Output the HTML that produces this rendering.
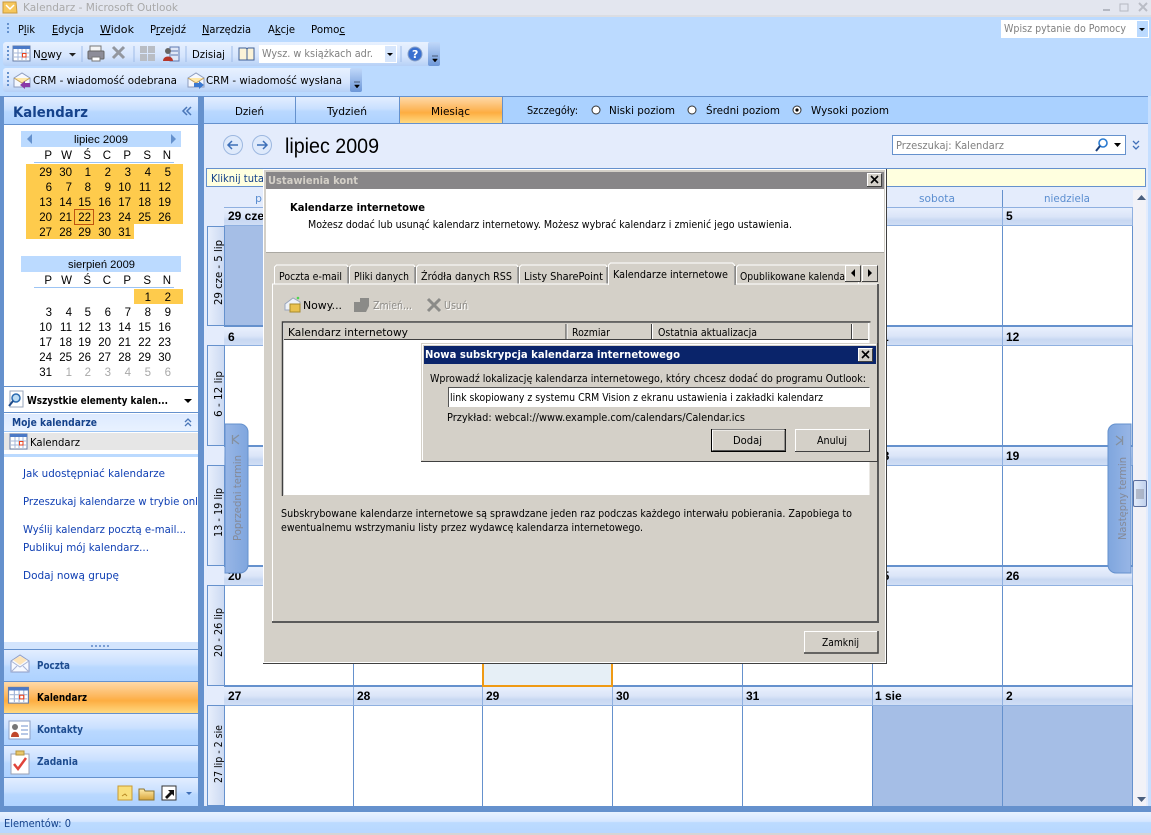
<!DOCTYPE html>
<html lang="pl">
<head>
<meta charset="utf-8">
<title>Kalendarz - Microsoft Outlook</title>
<style>
html,body{margin:0;padding:0;width:1151px;height:835px;overflow:hidden;background:#bbdaff}
svg{display:block}
text{font-family:"DejaVu Sans","Liberation Sans",sans-serif;font-size:11px;fill:#000;white-space:pre}
.b{font-weight:bold}
.n{font-family:"Liberation Sans",sans-serif;font-size:11.5px;text-anchor:end}
.g{fill:#a9a9a9}
.h{font-family:"Liberation Sans",sans-serif;font-weight:bold;font-size:12px}
.l{fill:#0f3fb3}
.d{fill:#15428b}
.m{fill:#808080}
</style>
</head>
<body>
<svg xmlns="http://www.w3.org/2000/svg" width="1151" height="835" viewBox="0 0 1151 835">
<defs>
<linearGradient id="tab" x1="0" y1="0" x2="0" y2="1"><stop offset="0" stop-color="#e3eeff"/><stop offset=".45" stop-color="#c9e0ff"/><stop offset=".55" stop-color="#b9d8ff"/><stop offset="1" stop-color="#aed2ff"/></linearGradient>
<linearGradient id="org" x1="0" y1="0" x2="0" y2="1"><stop offset="0" stop-color="#fed9a8"/><stop offset=".45" stop-color="#fdb85f"/><stop offset=".6" stop-color="#fdad41"/><stop offset="1" stop-color="#ffd981"/></linearGradient>
<linearGradient id="hdr" x1="0" y1="0" x2="0" y2="1"><stop offset="0" stop-color="#e9f0fd"/><stop offset=".5" stop-color="#dbe5f8"/><stop offset=".7" stop-color="#c8d8f2"/><stop offset="1" stop-color="#d0def5"/></linearGradient>
<linearGradient id="tb" x1="0" y1="0" x2="0" y2="1"><stop offset="0" stop-color="#e8f1ff"/><stop offset=".6" stop-color="#d5e5fd"/><stop offset="1" stop-color="#b6d0f6"/></linearGradient>
<linearGradient id="chev" x1="0" y1="0" x2="0" y2="1"><stop offset="0" stop-color="#c0d8fa"/><stop offset="1" stop-color="#6d97d8"/></linearGradient>
<linearGradient id="st" x1="0" y1="0" x2="0" y2="1"><stop offset="0" stop-color="#e8f2ff"/><stop offset=".45" stop-color="#d5e6ff"/><stop offset=".5" stop-color="#bcdbff"/><stop offset="1" stop-color="#b7d7ff"/></linearGradient>
<linearGradient id="wk" x1="0" y1="0" x2="1" y2="0"><stop offset="0" stop-color="#e8effc"/><stop offset="1" stop-color="#cbd9f2"/></linearGradient>
<linearGradient id="side" x1="0" y1="0" x2="1" y2="0"><stop offset="0" stop-color="#98b6e6"/><stop offset="1" stop-color="#7fa6de"/></linearGradient>
<linearGradient id="side2" x1="1" y1="0" x2="0" y2="0"><stop offset="0" stop-color="#98b6e6"/><stop offset="1" stop-color="#7fa6de"/></linearGradient>
<linearGradient id="moj" x1="0" y1="0" x2="0" y2="1"><stop offset="0" stop-color="#ddeaff"/><stop offset="1" stop-color="#e9f2ff"/></linearGradient>
<linearGradient id="thumb" x1="0" y1="0" x2="1" y2="0"><stop offset="0" stop-color="#e4ecfa"/><stop offset="1" stop-color="#bfd0ec"/></linearGradient>
<linearGradient id="fold" x1="0" y1="0" x2="0" y2="1"><stop offset="0" stop-color="#ffedae"/><stop offset="1" stop-color="#d9a53a"/></linearGradient>
<g id="cal">
<rect x="0" y="1" width="17" height="15" fill="#fff" stroke="#6a7fa6"/>
<rect x="0" y="1" width="17" height="3" fill="#4b79c6"/>
<path d="M1 8h15M1 12h15M5 4v11M9 4v11M13 4v11" stroke="#a5b7d8" fill="none"/>
<rect x="9.5" y="8.5" width="3.5" height="3.5" fill="#fff" stroke="#e8401c"/>
</g>
<g id="chv"><path d="M2 9h6M2.5 12h5l-2.5 3z" fill="#000" stroke="#000" stroke-width=".5"/></g>
<g id="env">
<path d="M1 6l8-5 8 5v9H1z" fill="#f5f8ff" stroke="#8d9cbd"/>
<path d="M1 6l8 5 8-5" fill="#ffe8a8" stroke="#c0a060"/>
</g>
</defs>

<!-- window chrome -->
<rect width="1151" height="835" fill="#bbdaff"/>
<rect width="1151" height="15" fill="#e3e6ef"/>
<rect y="15" width="1151" height="2" fill="#dbdde2"/>
<path d="M3 2h13l1 11H3z" fill="#f6c75c" stroke="#c99a3d"/>
<path d="M6 5l4 4 4-4" fill="none" stroke="#fff" stroke-width="1.5"/>
<text x="23" y="11" textLength="155" lengthAdjust="spacingAndGlyphs" style="fill:#a9a9a9">Kalendarz - Microsoft Outlook</text>
<rect x="1103" y="9" width="7" height="2" fill="#b4b8c2"/>
<rect x="1120" y="4" width="8" height="7" fill="none" stroke="#b4b8c2"/>
<path d="M1139 3l8 8M1147 3l-8 8" stroke="#b9bcc5" stroke-width="2"/>

<!-- menu -->
<path d="M7 23h2v2H7zM7 27h2v2H7zM7 31h2v2H7z" fill="#6591cd"/>
<text x="18" y="33" textLength="17" lengthAdjust="spacingAndGlyphs">P<tspan text-decoration="underline">l</tspan>ik</text>
<text x="52" y="33" textLength="32" lengthAdjust="spacingAndGlyphs"><tspan text-decoration="underline">E</tspan>dycja</text>
<text x="100" y="33" textLength="34" lengthAdjust="spacingAndGlyphs"><tspan text-decoration="underline">W</tspan>idok</text>
<text x="150" y="33" textLength="36" lengthAdjust="spacingAndGlyphs">P<tspan text-decoration="underline">r</tspan>zejdź</text>
<text x="202" y="33" textLength="49" lengthAdjust="spacingAndGlyphs"><tspan text-decoration="underline">N</tspan>arzędzia</text>
<text x="268" y="33" textLength="27" lengthAdjust="spacingAndGlyphs">A<tspan text-decoration="underline">k</tspan>cje</text>
<text x="311" y="33" textLength="34" lengthAdjust="spacingAndGlyphs">Pomo<tspan text-decoration="underline">c</tspan></text>
<rect x="1001" y="20" width="148" height="18" fill="#fff"/>
<text x="1004" y="32" textLength="122" lengthAdjust="spacingAndGlyphs" class="m">Wpisz pytanie do Pomocy</text>
<rect x="1137" y="21" width="11" height="16" fill="#bbdaff"/>
<path d="M1139 28h6l-3 3z" fill="#000"/>

<!-- toolbar 1 -->
<rect x="3" y="42" width="437" height="24" rx="3" fill="url(#tb)"/>
<rect x="428" y="42" width="12" height="24" rx="2" fill="url(#chev)"/>
<use href="#chv" x="430" y="47"/>
<path d="M7 46h2v2H7zM7 50h2v2H7zM7 54h2v2H7zM7 58h2v2H7z" fill="#6591cd"/>
<use href="#cal" x="13" y="45"/>
<text x="33" y="58" textLength="29" lengthAdjust="spacingAndGlyphs">N<tspan text-decoration="underline">o</tspan>wy</text>
<path d="M69 53h7l-3.500 3.500z" fill="#222"/>
<path d="M82 46v16M134 46v16M186 46v16M232 46v16M401 46v16" stroke="#9fbce8"/>
<rect x="90" y="46" width="11" height="5" fill="#f4f4f4" stroke="#777"/>
<rect x="88" y="51" width="16" height="8" rx="1" fill="#8d8d98" stroke="#666"/>
<rect x="92" y="57" width="8" height="4" fill="#fff" stroke="#777"/>
<path d="M113 47l11 11M124 47l-11 11" stroke="#93979f" stroke-width="3"/>
<path d="M140 46h7v7h-7zM148 46h7v7h-7zM140 54h7v7h-7zM148 54h7v7h-7z" fill="#b9bdc4"/>
<rect x="170" y="47" width="9" height="14" fill="#dfe7f7" stroke="#5f7ab0"/>
<path d="M171 51h7M171 55h7" stroke="#5f7ab0"/>
<circle cx="168" cy="51" r="3" fill="#666"/><path d="M163 61c0-6 10-6 10 0z" fill="#b5352a"/>
<text x="192" y="58" textLength="33" lengthAdjust="spacingAndGlyphs">Dzisia<tspan text-decoration="underline">j</tspan></text>
<path d="M239 48h7l1 1 1-1h6v12h-15z" fill="#fbf3d8" stroke="#3f5f96"/><path d="M247 49v11" stroke="#3f5f96"/>
<rect x="259" y="45" width="138" height="18" fill="#fff"/>
<text x="262" y="57" textLength="111" lengthAdjust="spacingAndGlyphs" class="m">Wysz. w książkach adr.</text>
<rect x="385" y="46" width="11" height="16" fill="#d7e6fc"/>
<path d="M387 53h6l-3 3z" fill="#000"/>
<circle cx="415" cy="54" r="7" fill="#3a70d0" stroke="#8aa2c8"/>
<text x="412" y="58" class="b" style="fill:#fff">?</text>

<!-- toolbar 2 -->
<rect x="3" y="68" width="359" height="24" rx="3" fill="url(#tb)"/>
<rect x="350" y="68" width="12" height="24" rx="2" fill="url(#chev)"/>
<use href="#chv" x="352" y="73"/>
<path d="M7 72h2v2H7zM7 76h2v2H7zM7 80h2v2H7zM7 84h2v2H7z" fill="#6591cd"/>
<use href="#env" x="13" y="72"/>
<path d="M20 85l5-4v2h5v4h-5v2z" fill="#8a3aa8"/>
<text x="33" y="84" textLength="144" lengthAdjust="spacingAndGlyphs">CRM - wiadomość odebrana</text>
<use href="#env" x="187" y="72"/>
<path d="M204 85l-5-4v2h-5v4h5v2z" fill="#3a78d0"/>
<text x="206" y="84" textLength="136" lengthAdjust="spacingAndGlyphs">CRM - wiadomość wysłana</text>

<!-- frame -->
<rect x="0" y="96" width="1148" height="716" fill="#6591cd"/>
<rect x="1148" y="96" width="3" height="716" fill="#c6dfff"/>

<!-- left pane -->
<rect x="4" y="97" width="194" height="27" fill="url(#tab)"/>
<text x="13" y="117" class="b d" style="font-size:14px" textLength="75" lengthAdjust="spacingAndGlyphs">Kalendarz</text>
<path d="M187 107l-4 4 4 4M191 107l-4 4 4 4" fill="none" stroke="#4a76b8" stroke-width="1.500"/>
<rect x="4" y="125" width="194" height="517" fill="#fff"/>

<rect x="21" y="131" width="160" height="16" fill="#bbdaff"/>
<path d="M32 134v10l-5-5z" fill="#6591cd"/><path d="M171 134v10l5-5z" fill="#6591cd"/>
<text x="74" y="143" textLength="54" lengthAdjust="spacingAndGlyphs" style="font-family:'Liberation Sans',sans-serif">lipiec 2009</text>
<g>
<text class="n" x="52" y="159">P</text><text class="n" x="72" y="159">W</text><text class="n" x="91" y="159">Ś</text><text class="n" x="111" y="159">C</text><text class="n" x="131" y="159">P</text><text class="n" x="151" y="159">S</text><text class="n" x="171" y="159">N</text>
</g>
<rect x="34" y="162" width="140" height="1" fill="#9cc4f4"/>
<path d="M26 164h157v60h-49v15H26z" fill="#fecb4c"/>
<rect x="74.500" y="209.500" width="19" height="15" fill="none" stroke="#c0540f"/>
<g>
<text class="n" x="52" y="176">29</text><text class="n" x="72" y="176">30</text><text class="n" x="91" y="176">1</text><text class="n" x="111" y="176">2</text><text class="n" x="131" y="176">3</text><text class="n" x="151" y="176">4</text><text class="n" x="171" y="176">5</text>
<text class="n" x="52" y="191">6</text><text class="n" x="72" y="191">7</text><text class="n" x="91" y="191">8</text><text class="n" x="111" y="191">9</text><text class="n" x="131" y="191">10</text><text class="n" x="151" y="191">11</text><text class="n" x="171" y="191">12</text>
<text class="n" x="52" y="206">13</text><text class="n" x="72" y="206">14</text><text class="n" x="91" y="206">15</text><text class="n" x="111" y="206">16</text><text class="n" x="131" y="206">17</text><text class="n" x="151" y="206">18</text><text class="n" x="171" y="206">19</text>
<text class="n" x="52" y="221">20</text><text class="n" x="72" y="221">21</text><text class="n" x="91" y="221">22</text><text class="n" x="111" y="221">23</text><text class="n" x="131" y="221">24</text><text class="n" x="151" y="221">25</text><text class="n" x="171" y="221">26</text>
<text class="n" x="52" y="236">27</text><text class="n" x="72" y="236">28</text><text class="n" x="91" y="236">29</text><text class="n" x="111" y="236">30</text><text class="n" x="131" y="236">31</text>
</g>

<rect x="21" y="256" width="160" height="16" fill="#bbdaff"/>
<text x="68" y="268" textLength="67" lengthAdjust="spacingAndGlyphs" style="font-family:'Liberation Sans',sans-serif">sierpień 2009</text>
<g>
<text class="n" x="52" y="284">P</text><text class="n" x="72" y="284">W</text><text class="n" x="91" y="284">Ś</text><text class="n" x="111" y="284">C</text><text class="n" x="131" y="284">P</text><text class="n" x="151" y="284">S</text><text class="n" x="171" y="284">N</text>
</g>
<rect x="34" y="287" width="140" height="1" fill="#9cc4f4"/>
<rect x="134" y="289" width="49" height="15" fill="#fecb4c"/>
<g>
<text class="n" x="151" y="301">1</text><text class="n" x="171" y="301">2</text>
<text class="n" x="52" y="316">3</text><text class="n" x="72" y="316">4</text><text class="n" x="91" y="316">5</text><text class="n" x="111" y="316">6</text><text class="n" x="131" y="316">7</text><text class="n" x="151" y="316">8</text><text class="n" x="171" y="316">9</text>
<text class="n" x="52" y="331">10</text><text class="n" x="72" y="331">11</text><text class="n" x="91" y="331">12</text><text class="n" x="111" y="331">13</text><text class="n" x="131" y="331">14</text><text class="n" x="151" y="331">15</text><text class="n" x="171" y="331">16</text>
<text class="n" x="52" y="346">17</text><text class="n" x="72" y="346">18</text><text class="n" x="91" y="346">19</text><text class="n" x="111" y="346">20</text><text class="n" x="131" y="346">21</text><text class="n" x="151" y="346">22</text><text class="n" x="171" y="346">23</text>
<text class="n" x="52" y="361">24</text><text class="n" x="72" y="361">25</text><text class="n" x="91" y="361">26</text><text class="n" x="111" y="361">27</text><text class="n" x="131" y="361">28</text><text class="n" x="151" y="361">29</text><text class="n" x="171" y="361">30</text>
<text class="n" x="52" y="376">31</text><text class="n g" x="72" y="376">1</text><text class="n g" x="91" y="376">2</text><text class="n g" x="111" y="376">3</text><text class="n g" x="131" y="376">4</text><text class="n g" x="151" y="376">5</text><text class="n g" x="171" y="376">6</text>
</g>

<rect x="4" y="386" width="194" height="1" fill="#6591cd"/>
<rect x="10" y="391" width="13" height="16" fill="#fff" stroke="#9aa7bd"/>
<circle cx="16" cy="398" r="4" fill="#bcdcf4" stroke="#2a6ab0" stroke-width="1.500"/><path d="M13 401l-4 5" stroke="#1f4a88" stroke-width="2"/>
<text x="27" y="404" class="b" textLength="141" lengthAdjust="spacingAndGlyphs">Wszystkie elementy kalen...</text>
<path d="M184 399h8l-4 4z" fill="#000"/>
<rect x="4" y="412" width="194" height="1" fill="#6591cd"/>
<rect x="4" y="414" width="194" height="18" fill="url(#moj)"/>
<rect x="4" y="431" width="194" height="1" fill="#9cc4f4"/>
<text x="12" y="426" class="b d" textLength="85" lengthAdjust="spacingAndGlyphs">Moje kalendarze</text>
<path d="M185 422l3-3 3 3M185 426l3-3 3 3" fill="none" stroke="#4a76b8" stroke-width="1.300"/>
<rect x="4" y="433" width="194" height="17" fill="#e6e6e6"/>
<use href="#cal" x="10" y="433"/>
<text x="30" y="446" textLength="50" lengthAdjust="spacingAndGlyphs">Kalendarz</text>
<rect x="4" y="454" width="194" height="3" fill="#bbdaff"/>
<text x="23" y="477" class="l" textLength="142" lengthAdjust="spacingAndGlyphs">Jak udostępniać kalendarze</text>
<text x="23" y="505" class="l" textLength="175" lengthAdjust="spacingAndGlyphs">Przeszukaj kalendarze w trybie onl</text>
<text x="23" y="533" class="l" textLength="163" lengthAdjust="spacingAndGlyphs">Wyślij kalendarz pocztą e-mail...</text>
<text x="23" y="551" class="l" textLength="126" lengthAdjust="spacingAndGlyphs">Publikuj mój kalendarz...</text>
<text x="23" y="579" class="l" textLength="96" lengthAdjust="spacingAndGlyphs">Dodaj nową grupę</text>

<!-- nav buttons -->
<rect x="4" y="642" width="194" height="7" fill="#d4e5fd"/>
<path d="M91 645h2v2h-2zM95 645h2v2h-2zM99 645h2v2h-2zM103 645h2v2h-2zM107 645h2v2h-2z" fill="#7a9ed4"/>
<rect x="4" y="649" width="194" height="1" fill="#6591cd"/>
<rect x="4" y="650" width="194" height="31" fill="url(#tab)"/>
<rect x="4" y="681" width="194" height="1" fill="#6591cd"/>
<rect x="4" y="682" width="194" height="31" fill="url(#org)"/>
<rect x="4" y="713" width="194" height="1" fill="#6591cd"/>
<rect x="4" y="714" width="194" height="31" fill="url(#tab)"/>
<rect x="4" y="745" width="194" height="1" fill="#6591cd"/>
<rect x="4" y="746" width="194" height="31" fill="url(#tab)"/>
<rect x="4" y="777" width="194" height="1" fill="#6591cd"/>
<rect x="4" y="778" width="194" height="30" fill="url(#tab)"/>
<path d="M11 661l9-6 9 6v11H11z" fill="#f6f9ff" stroke="#8e9cc6"/>
<path d="M11 661l9 6 9-6M11 672l6-6M29 672l-6-6" fill="none" stroke="#a8b4d4"/>
<path d="M13 660l7-4 7 4-7 5z" fill="#fde4b8"/>
<use href="#cal" x="9" y="686" transform="translate(-2 -34) scale(1.170 1.050)"/>
<rect x="9" y="721" width="21" height="18" fill="#fff" stroke="#8ea0c6"/>
<circle cx="15" cy="727" r="3" fill="#777"/><path d="M11 737c0-7 8-7 8 0z" fill="#c0472b"/>
<path d="M21 726h7M21 730h7M21 734h7" stroke="#6f92cc"/>
<rect x="11" y="754" width="18" height="20" fill="#fff" stroke="#9aa2b4"/>
<rect x="16" y="751" width="8" height="4" fill="#e9c76a" stroke="#b59540"/>
<path d="M14 764l4 5 8-11" fill="none" stroke="#e0443a" stroke-width="2.500"/>
<text x="37" y="669" class="b" style="fill:#1e4c8f" textLength="33" lengthAdjust="spacingAndGlyphs">Poczta</text>
<text x="37" y="701" class="b" textLength="50" lengthAdjust="spacingAndGlyphs">Kalendarz</text>
<text x="37" y="733" class="b" style="fill:#1e4c8f" textLength="46" lengthAdjust="spacingAndGlyphs">Kontakty</text>
<text x="37" y="765" class="b" style="fill:#1e4c8f" textLength="41" lengthAdjust="spacingAndGlyphs">Zadania</text>
<rect x="118" y="786" width="14" height="14" fill="#f9df7b" stroke="#c79a33"/>
<path d="M122 796l3-2 2 2" stroke="#b98a25" fill="none"/>
<path d="M139 789h5l1 2h9v9h-15z" fill="url(#fold)" stroke="#8d7430"/>
<rect x="162" y="786" width="14" height="14" fill="#fff" stroke="#333"/>
<path d="M165 797l5-5-2-2h6v6l-2-2-5 5z" fill="#111"/>
<path d="M186 792h6l-3 3z" fill="#3f6fb8"/>

<!-- right pane -->
<rect x="204" y="97" width="944" height="27" fill="#aad1ff"/>
<rect x="204" y="97" width="91" height="26" fill="url(#tab)"/>
<rect x="296" y="97" width="103" height="26" fill="url(#tab)"/>
<rect x="400" y="97" width="102" height="26" fill="url(#org)"/>
<path d="M295.500 97v26M399.500 97v26M502.500 97v26" stroke="#6591cd"/>
<rect x="204" y="123" width="944" height="1" fill="#6591cd"/>
<rect x="204" y="124" width="944" height="682" fill="#e4ecfc"/>
<text x="235" y="115" textLength="29" lengthAdjust="spacingAndGlyphs">Dzień</text>
<text x="327" y="115" textLength="40" lengthAdjust="spacingAndGlyphs">Tydzień</text>
<text x="431" y="115" textLength="39" lengthAdjust="spacingAndGlyphs">Miesiąc</text>
<text x="527" y="114" textLength="51" lengthAdjust="spacingAndGlyphs">Szczegóły:</text>
<circle cx="596" cy="110" r="4" fill="#fff" stroke="#333"/>
<text x="609" y="114" textLength="66" lengthAdjust="spacingAndGlyphs">Niski poziom</text>
<circle cx="692" cy="110" r="4" fill="#fff" stroke="#333"/>
<text x="706" y="114" textLength="74" lengthAdjust="spacingAndGlyphs">Średni poziom</text>
<circle cx="797" cy="110" r="4" fill="#fff" stroke="#333"/><circle cx="797" cy="110" r="1.600" fill="#000"/>
<text x="811" y="114" textLength="78" lengthAdjust="spacingAndGlyphs">Wysoki poziom</text>

<circle cx="233" cy="145" r="9.500" fill="#dfeafb" stroke="#9db8e0"/>
<path d="M238 145h-9M232 141l-4 4 4 4" fill="none" stroke="#3d6fb8" stroke-width="1.500"/>
<circle cx="262" cy="145" r="9.500" fill="#dfeafb" stroke="#9db8e0"/>
<path d="M257 145h9M263 141l4 4-4 4" fill="none" stroke="#3d6fb8" stroke-width="1.500"/>
<text x="285" y="153" style="font-family:'Liberation Sans',sans-serif;font-size:21px" textLength="94" lengthAdjust="spacingAndGlyphs">lipiec 2009</text>
<rect x="892.500" y="135.500" width="233" height="19" fill="#fff" stroke="#6591cd"/>
<text x="896" y="149" textLength="108" lengthAdjust="spacingAndGlyphs" class="m">Przeszukaj: Kalendarz</text>
<circle cx="1103" cy="143" r="4" fill="#fff" stroke="#2a7ad0" stroke-width="1.600"/>
<path d="M1100 146l-4 5" stroke="#1b3f7a" stroke-width="2"/>
<path d="M1114 143h7l-3.500 4z" fill="#000"/>
<path d="M1133 141l3 3 3-3M1133 146l3 3 3-3" fill="none" stroke="#3f6fb8" stroke-width="1.300"/>
<rect x="206.500" y="168.500" width="939" height="18" fill="#ffffdf" stroke="#6591cd"/>
<text x="211" y="182" class="d" textLength="53" lengthAdjust="spacingAndGlyphs">Kliknij tuta</text>

<text x="255" y="202" style="fill:#5b8ed0">p</text>
<text x="919" y="202" style="fill:#5b8ed0" textLength="36" lengthAdjust="spacingAndGlyphs">sobota</text>
<text x="1044" y="202" style="fill:#5b8ed0" textLength="46" lengthAdjust="spacingAndGlyphs">niedziela</text>
<path d="M1002.500 190v17" stroke="#6591cd"/>

<!-- grid -->
<rect x="224" y="207" width="909" height="599" fill="#fff"/>
<rect x="225" y="226" width="128" height="99" fill="#a5bee6"/>
<rect x="873" y="706" width="259" height="100" fill="#a5bee6"/>
<rect x="483" y="660" width="129" height="26" fill="#e6eff6"/>
<path d="M224.500 207v599M353.500 207v599M482.500 207v599M612.500 207v599M742.500 207v599M872.500 207v599M1002.500 207v599M1132.500 207v599" stroke="#6591cd"/>
<rect x="224" y="207" width="908" height="19" fill="url(#hdr)"/>
<rect x="224" y="327" width="908" height="18" fill="url(#hdr)"/>
<rect x="224" y="447" width="908" height="18" fill="url(#hdr)"/>
<rect x="224" y="567" width="908" height="18" fill="url(#hdr)"/>
<rect x="224" y="687" width="908" height="18" fill="url(#hdr)"/>
<path d="M224 207.500h908M224 225.500h908M224 345.500h908M224 465.500h908M224 585.500h908M224 705.500h908" stroke="#8fb0e0"/>
<path d="M353.500 207v19M482.500 207v19M612.500 207v19M742.500 207v19M872.500 207v19M1002.500 207v19M1132.500 207v19M353.500 327v18M482.500 327v18M612.500 327v18M742.500 327v18M872.500 327v18M1002.500 327v18M1132.500 327v18M353.500 447v18M482.500 447v18M612.500 447v18M742.500 447v18M872.500 447v18M1002.500 447v18M1132.500 447v18M353.500 567v18M482.500 567v18M612.500 567v18M742.500 567v18M872.500 567v18M1002.500 567v18M1132.500 567v18M353.500 687v18M482.500 687v18M612.500 687v18M742.500 687v18M872.500 687v18M1002.500 687v18M1132.500 687v18" stroke="#8fb0e0"/>
<path d="M224 326h908M224 446h908M224 566h908M224 686h908" stroke="#6591cd" stroke-width="2"/>
<path d="M483 660v26h129v-26" fill="none" stroke="#ef9a14" stroke-width="2"/>
<g>
<text class="h" x="228" y="220">29 cze</text>
<text class="h" x="1006" y="220">5</text>
<text class="h" x="228" y="341">6</text>
<text class="h" x="876" y="341">11</text>
<text class="h" x="1006" y="341">12</text>
<text class="h" x="876" y="460">18</text>
<text class="h" x="1006" y="460">19</text>
<text class="h" x="228" y="580">20</text>
<text class="h" x="876" y="580">25</text>
<text class="h" x="1006" y="580">26</text>
<text class="h" x="228" y="700">27</text>
<text class="h" x="357" y="700">28</text>
<text class="h" x="486" y="700">29</text>
<text class="h" x="616" y="700">30</text>
<text class="h" x="746" y="700">31</text>
<text class="h" x="875" y="700">1 sie</text>
<text class="h" x="1006" y="700">2</text>
</g>
<!-- week labels -->
<rect x="207.500" y="226.500" width="17" height="99" fill="url(#wk)" stroke="#6591cd"/>
<rect x="207.500" y="345.500" width="17" height="100" fill="url(#wk)" stroke="#6591cd"/>
<rect x="207.500" y="465.500" width="17" height="100" fill="url(#wk)" stroke="#6591cd"/>
<rect x="207.500" y="585.500" width="17" height="100" fill="url(#wk)" stroke="#6591cd"/>
<rect x="207.500" y="705.500" width="17" height="100" fill="url(#wk)" stroke="#6591cd"/>
<text transform="translate(222 305) rotate(-90)" textLength="65" lengthAdjust="spacingAndGlyphs">29 cze - 5 lip</text>
<text transform="translate(222 417) rotate(-90)" textLength="46" lengthAdjust="spacingAndGlyphs">6 - 12 lip</text>
<text transform="translate(222 537) rotate(-90)" textLength="49" lengthAdjust="spacingAndGlyphs">13 - 19 lip</text>
<text transform="translate(222 657) rotate(-90)" textLength="49" lengthAdjust="spacingAndGlyphs">20 - 26 lip</text>
<text transform="translate(222 783) rotate(-90)" textLength="58" lengthAdjust="spacingAndGlyphs">27 lip - 2 sie</text>

<!-- side tabs -->
<path d="M225 424h15a8 8 0 0 1 8 8v133a8 8 0 0 1-8 8h-15z" fill="url(#side)" stroke="#6591cd"/>
<path d="M232.500 435v9M239 435l-6 4.500 6 4.500" fill="none" stroke="#85909f" stroke-width="1.300"/>
<text transform="translate(241 541) rotate(-90)" style="fill:#858a98" textLength="86" lengthAdjust="spacingAndGlyphs">Poprzedni termin</text>
<path d="M1131 424h-15a8 8 0 0 0-8 8v133a8 8 0 0 0 8 8h15z" fill="url(#side2)" stroke="#6591cd"/>
<path d="M1122.500 436v9M1116 436l6 4.500-6 4.500" fill="none" stroke="#85909f" stroke-width="1.300"/>
<text transform="translate(1126 540) rotate(-90)" style="fill:#858a98" textLength="83" lengthAdjust="spacingAndGlyphs">Następny termin</text>

<!-- scrollbar -->
<rect x="1133" y="190" width="15" height="616" fill="#f2f2f7"/>
<rect x="1146" y="190" width="2" height="616" fill="#e4ecfc"/>
<path d="M1137 200h9l-4.500-5z" fill="#4b5f7e"/>
<path d="M1137 797h9l-4.500 5z" fill="#4b5f7e"/>
<rect x="1133.500" y="480.500" width="13" height="26" rx="1.500" fill="url(#thumb)" stroke="#5b6f9e"/>
<path d="M1136 490h8M1136 492h8M1136 494h8M1136 496h8M1136 498h8" stroke="#8a8f9e"/>

<!-- main dialog -->
<rect x="263" y="169" width="624" height="495" fill="#404040"/>
<rect x="263" y="169" width="623" height="494" fill="#fff"/>
<rect x="264" y="170" width="621" height="492" fill="#d4d0c8"/>
<rect x="266" y="172" width="618" height="17" fill="#888688"/>
<text x="268" y="184" class="b" style="fill:#d4d0c8" textLength="90" lengthAdjust="spacingAndGlyphs">Ustawienia kont</text>
<rect x="867" y="173" width="15" height="14" fill="#d4d0c8"/>
<path d="M867.500 186.500v-13h14" fill="none" stroke="#fff"/><path d="M867 186.500h14.500v-13" fill="none" stroke="#404040"/>
<path d="M871 176l7 7M878 176l-7 7" stroke="#000" stroke-width="1.600"/>
<rect x="266" y="189" width="618" height="63" fill="#fff"/>
<rect x="266" y="252" width="618" height="1" fill="#aaa8a2"/>
<text x="290" y="211" class="b" textLength="135" lengthAdjust="spacingAndGlyphs">Kalendarze internetowe</text>
<text x="308" y="228" textLength="484" lengthAdjust="spacingAndGlyphs">Możesz dodać lub usunąć kalendarz internetowy. Możesz wybrać kalendarz i zmienić jego ustawienia.</text>

<!-- tab control -->
<path d="M274.500 284v-17l2-2h70l1 1v18" fill="#d4d0c8" stroke="#fff"/><path d="M348 267v17" stroke="#404040"/>
<path d="M349.500 284v-17l2-2h62l1 1v18" fill="#d4d0c8" stroke="#fff"/><path d="M415 267v17" stroke="#404040"/>
<path d="M416.500 284v-17l2-2h98l1 1v18" fill="#d4d0c8" stroke="#fff"/><path d="M518 267v17" stroke="#404040"/>
<path d="M519.500 284v-17l2-2h84l1 1v18" fill="#d4d0c8" stroke="#fff"/><path d="M607 267v17" stroke="#404040"/>
<path d="M736.500 284v-17l2-2h120v19" fill="#d4d0c8" stroke="#fff"/>
<rect x="272" y="284" width="607" height="339" fill="#d4d0c8"/>
<path d="M272.500 623v-339h606" fill="none" stroke="#fff"/>
<path d="M272 622h606v-338" fill="none" stroke="#5a5a5a" stroke-width="2"/>
<path d="M608.500 285v-20l2-2h122l2 2v20" fill="#d4d0c8" stroke="#fff"/><path d="M735 266v19" stroke="#404040"/>
<rect x="609" y="283" width="125" height="3" fill="#d4d0c8"/>
<text x="279" y="280" textLength="63" lengthAdjust="spacingAndGlyphs">Poczta e-mail</text>
<text x="354" y="280" textLength="55" lengthAdjust="spacingAndGlyphs">Pliki danych</text>
<text x="421" y="280" textLength="91" lengthAdjust="spacingAndGlyphs">Źródła danych RSS</text>
<text x="524" y="280" textLength="79" lengthAdjust="spacingAndGlyphs">Listy SharePoint</text>
<text x="613" y="278" textLength="115" lengthAdjust="spacingAndGlyphs">Kalendarze internetowe</text>
<text x="740" y="280" textLength="105" lengthAdjust="spacingAndGlyphs">Opublikowane kalenda</text>
<rect x="845" y="265" width="16" height="17" fill="#d4d0c8"/><path d="M845.500 281.500v-16h15" fill="none" stroke="#fff"/><path d="M845 281.500h15.500v-16" fill="none" stroke="#404040"/>
<path d="M855 269v8l-4-4z" fill="#000"/>
<rect x="862" y="265" width="16" height="17" fill="#d4d0c8"/><path d="M862.500 281.500v-16h15" fill="none" stroke="#fff"/><path d="M862 281.500h15.500v-16" fill="none" stroke="#404040"/>
<path d="M868 269v8l4-4z" fill="#000"/>

<!-- inner toolbar -->
<path d="M285 304l8-6 7 4v8h-15z" fill="#eef2f8" stroke="#9aa6bc"/>
<rect x="290" y="304" width="10" height="8" fill="#e9c14e" stroke="#a88a2c"/>
<circle cx="298" cy="298" r="1.300" fill="#4fd44f"/>
<text x="303" y="309" textLength="39" lengthAdjust="spacingAndGlyphs">Nowy...</text>
<path d="M354 302h6v-4h9v8l-3 6h-12z" fill="#8b8b88"/>
<text x="374" y="310" style="fill:#fff" textLength="39" lengthAdjust="spacingAndGlyphs">Zmień...</text>
<text x="373" y="309" style="fill:#8e8c88" textLength="39" lengthAdjust="spacingAndGlyphs">Zmień...</text>
<path d="M428 299l12 12M440 299l-12 12" stroke="#8b8b88" stroke-width="3"/>
<text x="445" y="310" style="fill:#fff" textLength="24" lengthAdjust="spacingAndGlyphs">Usuń</text>
<text x="444" y="309" style="fill:#8e8c88" textLength="24" lengthAdjust="spacingAndGlyphs">Usuń</text>

<!-- list -->
<rect x="282" y="322" width="588" height="174" fill="#fff"/>
<path d="M282.500 496v-174h588" fill="none" stroke="#404040" stroke-width="1.500"/>
<path d="M283 495.500h587v-173" fill="none" stroke="#d4d0c8"/>
<rect x="284" y="323" width="584" height="16" fill="#d4d0c8"/>
<path d="M284 339.500h584M566 324v15M651.500 324v15M851.500 324v15" stroke="#404040"/>
<path d="M567 324v15M652.500 324v15M852.500 324v15" stroke="#fff"/>
<text x="288" y="336" textLength="120" lengthAdjust="spacingAndGlyphs">Kalendarz internetowy</text>
<text x="572" y="336" textLength="38" lengthAdjust="spacingAndGlyphs">Rozmiar</text>
<text x="658" y="336" textLength="99" lengthAdjust="spacingAndGlyphs">Ostatnia aktualizacja</text>
<text x="281" y="517" textLength="571" lengthAdjust="spacingAndGlyphs">Subskrybowane kalendarze internetowe są sprawdzane jeden raz podczas każdego interwału pobierania. Zapobiega to</text>
<text x="281" y="531" textLength="362" lengthAdjust="spacingAndGlyphs">ewentualnemu wstrzymaniu listy przez wydawcę kalendarza internetowego.</text>

<rect x="804" y="631" width="75" height="23" fill="#d4d0c8"/>
<path d="M804.500 653v-21.500h74" fill="none" stroke="#fff"/>
<path d="M804 653h74v-22" fill="none" stroke="#404040" stroke-width="1.500"/>
<text x="822" y="646" textLength="37" lengthAdjust="spacingAndGlyphs">Zamknij</text>

<!-- sub dialog -->
<rect x="421" y="343" width="457" height="119" fill="#404040"/>
<rect x="421" y="343" width="456" height="118" fill="#d4d0c8"/>
<rect x="422" y="344" width="454" height="116" fill="#fff"/>
<rect x="423" y="345" width="453" height="115" fill="#d4d0c8"/>
<rect x="424" y="346" width="452" height="18" fill="#0a246a"/>
<text x="425" y="358" class="b" style="fill:#fff" textLength="255" lengthAdjust="spacingAndGlyphs">Nowa subskrypcja kalendarza internetowego</text>
<rect x="858" y="348" width="15" height="14" fill="#d4d0c8"/>
<path d="M858.500 361.500v-13h14" fill="none" stroke="#fff"/><path d="M858 361.500h14.500v-13" fill="none" stroke="#404040"/>
<path d="M862 351l7 7M869 351l-7 7" stroke="#000" stroke-width="1.600"/>
<text x="430" y="382" textLength="436" lengthAdjust="spacingAndGlyphs">Wprowadź lokalizację kalendarza internetowego, który chcesz dodać do programu Outlook:</text>
<rect x="448" y="387" width="422" height="20" fill="#fff"/>
<path d="M448.500 407v-19.500h421" fill="none" stroke="#555"/>
<text x="450" y="401" textLength="373" lengthAdjust="spacingAndGlyphs">link skopiowany z systemu CRM Vision z ekranu ustawienia i zakładki kalendarz</text>
<text x="447" y="421" textLength="298" lengthAdjust="spacingAndGlyphs">Przykład: webcal://www.example.com/calendars/Calendar.ics</text>
<rect x="711.500" y="429.500" width="74" height="22" fill="#d4d0c8" stroke="#000"/>
<path d="M712.500 450v-20h72" fill="none" stroke="#fff"/>
<path d="M712.500 450.500h72.500v-20" fill="none" stroke="#555"/>
<text x="733" y="444" textLength="29" lengthAdjust="spacingAndGlyphs">Dodaj</text>
<rect x="795" y="429" width="75" height="23" fill="#d4d0c8"/>
<path d="M795.500 451v-21.500h74" fill="none" stroke="#fff"/>
<path d="M795 451.500h74.500v-22" fill="none" stroke="#404040"/>
<text x="817" y="444" textLength="30" lengthAdjust="spacingAndGlyphs">Anuluj</text>

<!-- status bar -->
<rect x="0" y="806" width="1151" height="6" fill="#6591cd"/>
<rect x="0" y="812" width="1151" height="21" fill="url(#st)"/>
<rect x="0" y="833" width="1151" height="2" fill="#d5d5d5"/>
<text x="4" y="827" class="d" textLength="67" lengthAdjust="spacingAndGlyphs">Elementów: 0</text>
</svg>
</body>
</html>
